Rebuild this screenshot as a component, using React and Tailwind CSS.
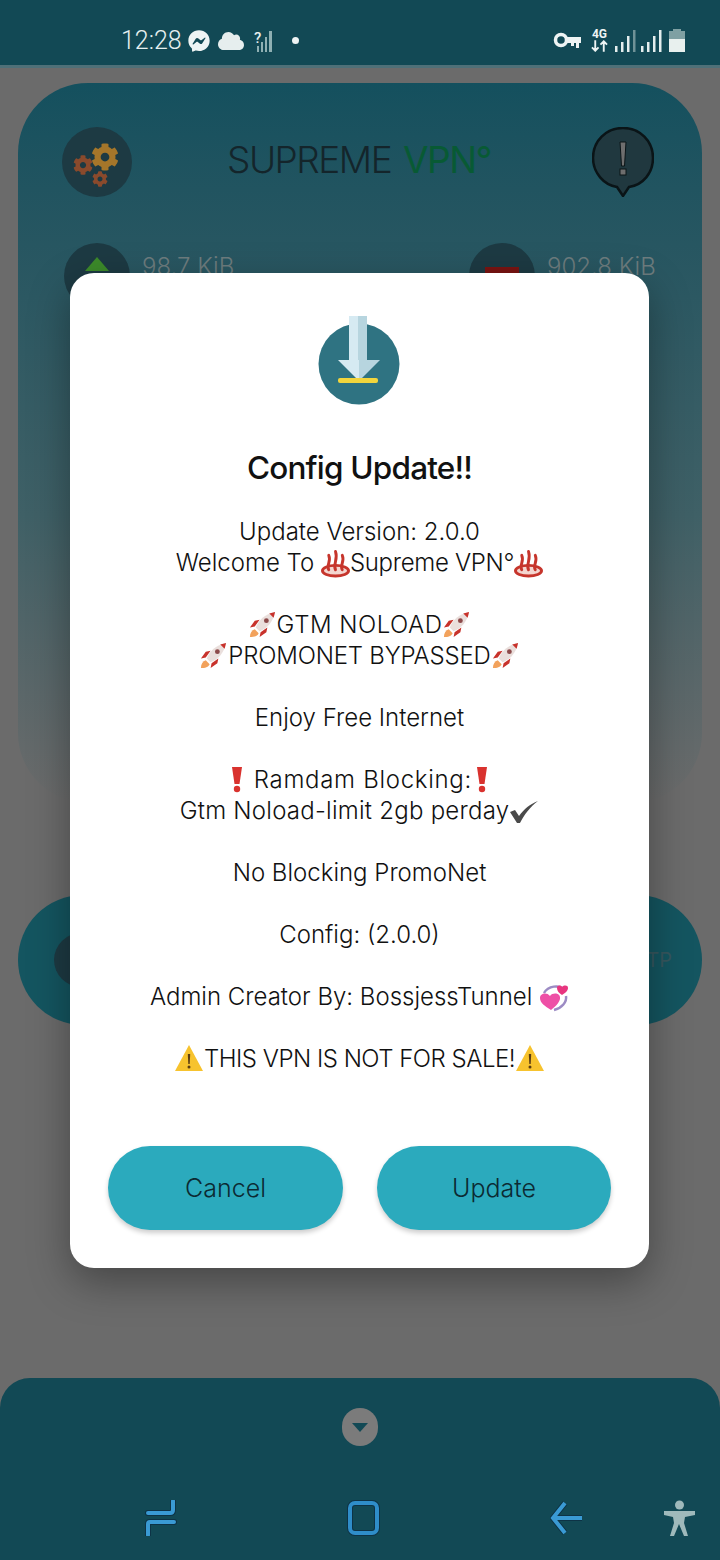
import React from "react";
import { FaFacebookMessenger, FaCloud, FaCog } from "react-icons/fa";

function HotSprings() {
  return (
    <svg viewBox="0 0 30 30" className="inline-block w-[29px] h-[30px] align-[-7px]">
      <ellipse cx="15" cy="23" rx="13.500" ry="5.500" fill="#f4d6d0" stroke="#c6352c" strokeWidth="3" />
      <path d="M8 22c-3-5 3-8 0-15M15 22c-3-6 3-10 0-19M22 22c-3-5 3-8 0-15" fill="none" stroke="#c6352c" strokeWidth="3" strokeLinecap="round" />
    </svg>
  );
}

function Rocket() {
  return (
    <svg viewBox="0 0 30 30" className="inline-block w-[29px] h-[29px] align-[-6px]">
      <path d="M2 28c0-4 2-7 5-8l4 4c-1 3-5 4-9 4z" fill="#f2a25c" />
      <path d="M7 17l-5 1 5-7 5-1zM13 23l-1 5 7-5 1-5z" fill="#c8322b" />
      <path d="M8 18C11 10 18 4 28 2c-2 10-8 17-16 20z" fill="#eadfdc" />
      <path d="M22 3.500l6-1.500-1.500 6z" fill="#c8322b" />
      <circle cx="19" cy="11" r="2.500" fill="#8c4a4a" />
    </svg>
  );
}

function Bang() {
  return (
    <svg viewBox="0 0 20 30" className="inline-block w-[20px] h-[30px] align-[-6px]">
      <path d="M5 3h10l-2.500 17h-5z" fill="#d9322e" />
      <circle cx="10" cy="25" r="3.200" fill="#d9322e" />
    </svg>
  );
}

function Check() {
  return (
    <svg viewBox="0 0 30 24" className="inline-block w-[30px] h-[24px] align-[-5px]">
      <path d="M1 12l5-2 4 6C15 9 21 4 29 1 21 7 15 15 11 23h-3z" fill="#4a4a4a" />
    </svg>
  );
}

function Hearts() {
  return (
    <svg viewBox="0 0 30 30" className="inline-block w-[30px] h-[30px] align-[-7px]">
      <path d="M5 11C9 4 20 2 26 8" fill="none" stroke="#9c8bc4" strokeWidth="2.500" />
      <path d="M27 14c1 6-4 12-12 14" fill="none" stroke="#9c8bc4" strokeWidth="2.500" />
      <path d="M12 28C6 24 1 21 1 16c0-5 7-6 10-2 3-4 11-3 10 3-1 4-5 8-9 11z" fill="#ee4fa6" />
      <path d="M23 13c-3-2-5-4-5-7 0-3 4-3 5-1 2-2 6-2 6 1 0 3-3 5-6 7z" fill="#e8357f" />
    </svg>
  );
}

function Warn() {
  return (
    <svg viewBox="0 0 30 28" className="inline-block w-[30px] h-[28px] align-[-5px]">
      <path d="M15 1l14 26H1z" fill="#f7c32e" />
      <path d="M13.800 10h2.400l-.5 10h-1.400z" fill="#5b3d12" />
      <circle cx="15" cy="23" r="1.500" fill="#5b3d12" />
    </svg>
  );
}

function Bars({ dim }) {
  return (
    <svg viewBox="0 0 22 24" className="w-[22px] h-[24px]">
      <rect x="1" y="17" width="2.500" height="6" fill="#e4eeee" />
      <rect x="7" y="13" width="2.500" height="10" fill="#e4eeee" />
      <rect x="13" y="7" width="2.500" height="16" fill="#e4eeee" />
      <rect x="19" y="1" width="2.500" height="22" fill={dim ? "#6f9297" : "#e4eeee"} />
    </svg>
  );
}

function StatusBar() {
  return (
    <div className="h-[68px] shrink-0 bg-[#124955] border-b-[3px] border-[#4f7078] flex items-center pl-[121px] pr-[35px] pt-[16px]">
      <span className="text-[25px] text-[#e6f0f0] w-[67px] font-['Roboto',sans-serif] font-light">12:28</span>
      <FaFacebookMessenger className="w-[22px] h-[22px] text-[#eef4f4]" />
      <FaCloud className="ml-[8px] w-[26px] h-[26px] text-[#e6eeee]" />
      <div className="ml-[9px] w-[20px] h-[24px] relative">
        <svg viewBox="0 0 20 24" className="w-[20px] h-[24px]">
          <rect x="4" y="17" width="2" height="6" fill="#8fb0b3" />
          <rect x="8" y="13" width="2" height="10" fill="#8fb0b3" />
          <rect x="12" y="8" width="2" height="15" fill="#8fb0b3" />
          <rect x="16" y="2" width="3" height="21" fill="#8fb0b3" />
        </svg>
        <span className="absolute left-[1px] top-[1px] text-[15px] leading-[16px] font-medium text-[#e6eeee] font-['Roboto',sans-serif]">?</span>
      </div>
      <div className="ml-[19px] w-[7px] h-[7px] rounded-full bg-[#eef4f4]" />
      <div className="ml-auto flex items-center">
        <svg viewBox="0 0 28 18" className="w-[28px] h-[18px]">
          <circle cx="8" cy="8" r="5.500" fill="none" stroke="#eef4f4" strokeWidth="3.500" />
          <path d="M13 5h15v6h-2v5h-3v-5h-2v3h-3v-3h-5z" fill="#eef4f4" />
        </svg>
        <div className="ml-[10px] w-[17px] flex flex-col items-center text-[#eef4f4] font-['Roboto',sans-serif] font-bold text-[12px] leading-[11px]">
          <span>4G</span>
          <svg viewBox="0 0 18 12" className="w-[17px] h-[12px]" fill="none" stroke="#eef4f4" strokeWidth="2">
            <path d="M4.500 0v11M1 7.500l3.500 3.500 3.500-3.500M13.500 12V1M10 4.500L13.500 1 17 4.500" />
          </svg>
        </div>
        <div className="ml-[6px]"><Bars dim /></div>
        <div className="ml-[4px]"><Bars /></div>
        <div className="ml-[7px] w-[16px] h-[23px] flex flex-col items-center">
          <div className="w-[8px] h-[2px] bg-[#7fa0a3]" />
          <div className="w-[16px] h-[8px] bg-[#7fa0a3]" />
          <div className="w-[16px] h-[13px] bg-[#e8f0ee]" />
        </div>
      </div>
    </div>
  );
}

function MainCard() {
  return (
    <div className="mt-[15px] mx-[18px] h-[720px] shrink-0 rounded-[70px] bg-gradient-to-b from-[#14505e] via-[#3f6066] via-60% to-[#6b6b6b] pt-[44px] px-[44px]">
      <div className="flex items-start">
        <div className="w-[70px] h-[70px] rounded-full bg-[#1d3a43] relative">
          <FaCog className="absolute left-[29px] top-[16px] w-[28px] h-[28px] text-[#a5762a]" />
          <FaCog className="absolute left-[11px] top-[28px] w-[20px] h-[20px] text-[#8a4a2c]" />
          <FaCog className="absolute left-[30px] top-[44px] w-[16px] h-[16px] text-[#8a4a2c]" />
        </div>
        <div className="ml-[95px] mt-[11px] text-[37px] leading-[44px] text-[#14252b] font-['Inter',sans-serif] font-light tracking-[-1.500px] whitespace-nowrap">
          SUPREME <span className="ml-[3px] text-[#085a34] font-normal">VPN°</span>
        </div>
        <svg viewBox="0 0 62 70" className="ml-auto mr-[4px] w-[62px] h-[70px]">
          <path d="M31 1C14 1 1 14 1 31c0 15 11 27 24 29l6 9 6-9c14-2 24-14 24-29C61 14 48 1 31 1z" fill="#20383f" stroke="#0a1417" strokeWidth="2.500" />
          <path d="M28 15h6l-1.500 24h-3z" fill="#6e6e6e" stroke="#0a1417" />
          <rect x="28" y="42" width="6" height="6" fill="#6e6e6e" stroke="#0a1417" />
        </svg>
      </div>
      <div className="mt-[46px] flex">
        <div className="w-[66px] h-[66px] shrink-0 ml-[2px] rounded-full bg-[#1d3a43] flex justify-center pt-[14px]">
          <div className="w-0 h-0 border-x-[12px] border-x-transparent border-b-[14px] border-b-[#3c8a2a]" />
        </div>
        <span className="ml-[12px] mt-[9px] w-[93px] shrink-0 whitespace-nowrap text-[24px] leading-[30px] text-[#6d7c7e] font-['Inter',sans-serif] font-light">98.7 KiB</span>
        <div className="ml-[234px] w-[66px] h-[66px] shrink-0 rounded-full bg-[#1d3a43] flex justify-center pt-[24px]">
          <div className="w-[34px] h-[8px] bg-[#7a1412]" />
        </div>
        <span className="ml-[12px] mt-[9px] shrink-0 whitespace-nowrap text-[24px] leading-[30px] text-[#6d7c7e] font-['Inter',sans-serif] font-light">902.8 KiB</span>
      </div>
    </div>
  );
}

function Dialog() {
  return (
    <div className="absolute left-[70px] top-[273px] w-[579px] h-[995px] rounded-[24px] bg-white shadow-[0_14px_40px_rgba(0,0,0,0.35)] flex flex-col items-center pt-[43px] text-[#111] font-['Inter',sans-serif]">
      <svg viewBox="0 0 82 90" className="ml-[-2px] w-[82px] h-[90px] shrink-0">
        <circle cx="41" cy="48" r="40.500" fill="#2f7382" />
        <rect x="31" y="0" width="9" height="46" fill="#d6eaf2" />
        <rect x="40" y="0" width="9" height="46" fill="#b7d5df" />
        <path d="M20 44h21v21z" fill="#d6eaf2" />
        <path d="M62 44H41v21z" fill="#b7d5df" />
        <rect x="20" y="62" width="40" height="5" rx="2" fill="#f2d53c" />
      </svg>
      <h1 className="mt-[42px] text-[31.500px] leading-[40px] font-medium tracking-[-0.800px]">Config Update!!</h1>
      <div className="mt-[28px] text-[24px] leading-[31px] text-center font-light">
        <p>Update Version: 2.0.0<br />Welcome To <HotSprings /><span className="tracking-[-0.300px]">Supreme VPN°</span><HotSprings /></p>
        <p className="mt-[31px]"><Rocket /><span className="tracking-[0.500px]">GTM NOLOAD</span><Rocket /><br /><Rocket /><span className="tracking-[-0.200px]">PROMONET BYPASSED</span><Rocket /></p>
        <p className="mt-[31px]">Enjoy Free Internet</p>
        <p className="mt-[31px]"><Bang /> <span className="tracking-[0.700px]">Ramdam Blocking:</span><Bang /><br /><span className="tracking-[0.250px]">Gtm Noload-limit 2gb perday</span><Check /></p>
        <p className="mt-[31px]">No Blocking PromoNet</p>
        <p className="mt-[31px]">Config: (2.0.0)</p>
        <p className="mt-[31px]">Admin Creator By: BossjessTunnel <Hearts /></p>
        <p className="mt-[31px]"><Warn /><span className="tracking-[-0.500px]">THIS VPN IS NOT FOR SALE!</span><Warn /></p>
      </div>
      <div className="mt-auto mb-[38px] flex gap-[34px]">
        <button className="w-[235px] h-[84px] rounded-full bg-[#2baabd] shadow-[0_3px_5px_rgba(0,0,0,0.2)] pt-[2px] text-[25px] font-light text-[#0c2a33]">Cancel</button>
        <button className="w-[234px] h-[84px] rounded-full bg-[#2baabd] shadow-[0_3px_5px_rgba(0,0,0,0.2)] pt-[2px] text-[25px] font-light text-[#0c2a33]">Update</button>
      </div>
    </div>
  );
}

function NavBar() {
  return (
    <div className="mt-auto h-[182px] shrink-0 rounded-t-[30px] bg-[#124955] flex flex-col">
      <div className="mt-[30px] mx-auto w-[36px] h-[38px] rounded-full bg-[#7b7b7b] flex items-center justify-center">
        <div className="w-0 h-0 border-x-[8px] border-x-transparent border-t-[9px] border-t-[#124955]" />
      </div>
      <div className="mt-[54px] flex items-center pl-[145px]">
        <svg viewBox="0 0 33 36" className="w-[33px] h-[36px]" fill="none" strokeLinecap="round">
          <path d="M28 1v9q0 3-3 3H3M29 22H5q-2 0-2 2v11" stroke="#0d3346" strokeWidth="6" />
          <path d="M28 1v9q0 3-3 3H3M29 22H5q-2 0-2 2v11" stroke="#3a9ad4" strokeWidth="4" />
        </svg>
        <svg viewBox="0 0 33 36" className="ml-[169px] w-[33px] h-[36px]" fill="none">
          <rect x="3" y="3" width="27" height="30" rx="5" stroke="#0d3346" strokeWidth="6" />
          <rect x="3" y="3" width="27" height="30" rx="5" stroke="#2f8dc9" strokeWidth="4" />
        </svg>
        <svg viewBox="0 0 33 36" className="ml-[170px] w-[33px] h-[36px]" fill="none">
          <path d="M15 3L3 18l12 15M3 18h29" stroke="#0d3346" strokeWidth="6" />
          <path d="M15 3L3 18l12 15M3 18h29" stroke="#3a9ad4" strokeWidth="4" />
        </svg>
        <svg viewBox="0 0 33 36" className="ml-[80px] w-[33px] h-[36px]" fill="#9fb9bb">
          <circle cx="16.500" cy="5" r="4.500" />
          <path d="M1 11h31v4l-10 2-1 6 4 13h-4l-5-12-5 12H7l4-13-1-6-9-2z" />
        </svg>
      </div>
    </div>
  );
}

export default function App() {
  return (
    <div className="relative w-[720px] h-[1560px] overflow-hidden bg-[#6b6b6b] flex flex-col font-['Inter',sans-serif]">
      <StatusBar />
      <MainCard />
      <div className="mt-[92px] mx-[18px] h-[130px] shrink-0 rounded-full bg-[#145560] flex items-center px-[36px]">
        <div className="w-[54px] h-[54px] rounded-full bg-[#1d3a43]" />
        <span className="ml-auto mr-[-6px] text-[20px] text-[#36575e]">TP</span>
      </div>
      <NavBar />
      <Dialog />
    </div>
  );
}
